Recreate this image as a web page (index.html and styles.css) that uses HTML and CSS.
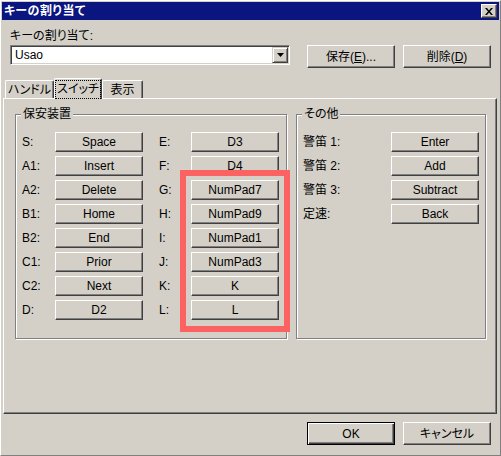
FILE: index.html
```html
<!DOCTYPE html>
<html lang="ja">
<head>
<meta charset="utf-8">
<title>キーの割り当て</title>
<link rel="stylesheet" href="styles.css">
</head>
<body>
<div class="window">
  <div class="titlebar">
    <span class="title">キーの割り当て</span>
    <span class="close"><svg width="8" height="7" viewBox="0 0 8 7"><path d="M0 0h2l2 2.5L6 0h2L5 3.5 8 7H6L4 4.5 2 7H0l3-3.5z" fill="#000"/></svg></span>
  </div>
  <div class="client">
    <div class="field-label">キーの割り当て:</div>
    <div class="top-row">
      <div class="combo">
        <span class="combo-text">Usao</span>
        <span class="combo-btn"><svg width="7" height="4" viewBox="0 0 7 4"><path d="M0 0h7L3.5 4z" fill="#000"/></svg></span>
      </div>
      <button class="btn top-btn">保存(<u>E</u>)...</button>
      <button class="btn top-btn">削除(<u>D</u>)</button>
    </div>
    <div class="tabs">
      <div class="tab t1">ハンドル</div>
      <div class="tab t2 selected"><span class="focus">スイッチ</span></div>
      <div class="tab t3">表示</div>
    </div>
    <div class="panel">
      <div class="groups">
        <div class="group g1">
          <div class="group-title">保安装置</div>
          <div class="grid grid1">
            <span class="lbl">S:</span><button class="btn key">Space</button><span></span><span class="lbl">E:</span><button class="btn key">D3</button>
            <span class="lbl">A1:</span><button class="btn key">Insert</button><span></span><span class="lbl">F:</span><button class="btn key">D4</button>
            <span class="lbl">A2:</span><button class="btn key">Delete</button><span></span><span class="lbl">G:</span><button class="btn key">NumPad7</button>
            <span class="lbl">B1:</span><button class="btn key">Home</button><span></span><span class="lbl">H:</span><button class="btn key">NumPad9</button>
            <span class="lbl">B2:</span><button class="btn key">End</button><span></span><span class="lbl">I:</span><button class="btn key">NumPad1</button>
            <span class="lbl">C1:</span><button class="btn key">Prior</button><span></span><span class="lbl">J:</span><button class="btn key">NumPad3</button>
            <span class="lbl">C2:</span><button class="btn key">Next</button><span></span><span class="lbl">K:</span><button class="btn key">K</button>
            <span class="lbl">D:</span><button class="btn key">D2</button><span></span><span class="lbl">L:</span><button class="btn key">L</button>
          </div>
        </div>
        <div class="group g2">
          <div class="group-title">その他</div>
          <div class="grid grid2">
            <span class="lbl">警笛 1:</span><button class="btn key">Enter</button>
            <span class="lbl">警笛 2:</span><button class="btn key">Add</button>
            <span class="lbl">警笛 3:</span><button class="btn key">Subtract</button>
            <span class="lbl">定速:</span><button class="btn key">Back</button>
          </div>
        </div>
      </div>
    </div>
    <div class="bottom-row">
      <button class="btn bottom-btn default">OK</button>
      <button class="btn bottom-btn">キャンセル</button>
    </div>
  </div>
  <div class="highlight"></div>
</div>
</body>
</html>
```
FILE: styles.css
```css
* { box-sizing: border-box; }
html, body { margin: 0; padding: 0; background: #d4d0c8; }
body {
  font-family: "Liberation Sans", "Noto Sans CJK JP", sans-serif;
  font-size: 12px;
  line-height: 14px;
  color: #000;
  font-feature-settings: "palt";
}
.window {
  position: relative;
  width: 501px;
  height: 456px;
  background: #d4d0c8;
  border: 1px solid;
  border-color: #ffffff #808080 #808080 #ffffff;
  padding: 1px;
  display: flex;
  flex-direction: column;
}
.titlebar {
  height: 18px;
  background: #0a1580;
  color: #fff;
  font-weight: bold;
  display: flex;
  align-items: center;
  justify-content: space-between;
  padding: 0 2px 0 2px;
}
.title { letter-spacing: 0.5px; }
.close {
  width: 16px;
  height: 14px;
  background: #d4d0c8;
  border: 1px solid;
  border-color: #fff #404040 #404040 #fff;
  box-shadow: inset -1px -1px #808080;
  display: flex;
  align-items: center;
  justify-content: center;
}
.client { flex: 1; display: flex; flex-direction: column; }
.field-label { margin: 9px 8px 0; height: 14px; }
.top-row {
  display: flex;
  align-items: flex-start;
  gap: 8px;
  margin: 2px 8px 0;
}
.combo {
  width: 280px;
  height: 20px;
  margin-right: 9px;
  background: #fff;
  border: 1px solid;
  border-color: #808080 #fff #fff #808080;
  box-shadow: inset 1px 1px #404040, inset -1px -1px #d4d0c8;
  padding: 1px;
  display: flex;
  align-items: center;
}
.combo-text { flex: 1; padding-left: 3px; }
.combo-btn {
  width: 16px;
  height: 16px;
  background: #d4d0c8;
  border: 1px solid;
  border-color: #d4d0c8 #404040 #404040 #d4d0c8;
  box-shadow: inset 1px 1px #fff, inset -1px -1px #808080;
  display: flex;
  align-items: center;
  justify-content: center;
}
.btn {
  font: inherit;
  color: #000;
  background: #d4d0c8;
  border: 1px solid;
  border-color: #fff #404040 #404040 #fff;
  box-shadow: inset -1px -1px #808080;
  padding: 0;
  margin: 0;
  text-align: center;
  border-radius: 0;
}
.btn u { text-decoration: underline; }
.top-btn { width: 88px; height: 23px; }
.tabs {
  display: flex;
  align-items: flex-end;
  height: 20px;
  margin: 10px 0 0 3px;
}
.tab {
  height: 18px;
  background: #d4d0c8;
  border-top: 1px solid #fff;
  border-left: 1px solid #fff;
  border-right: 1px solid #404040;
  box-shadow: inset -1px 0 #808080;
  border-radius: 2px 2px 0 0;
  display: flex;
  align-items: center;
  justify-content: center;
}
.t1 { width: 49px; }
.t2 { width: 48px; }
.t3 { width: 41px; }
.tab.selected {
  height: 21px;
  margin-bottom: -1px;
  position: relative;
  z-index: 1;
}
.focus {
  outline: 1px dotted #000;
  padding: 1px 1px 2px;
  line-height: 14px;
}
.panel {
  margin: 0 2px 0 1px;
  height: 316px;
  border-top: 1px solid #fff;
  border-left: 1px solid #fff;
  border-right: 1px solid #404040;
  border-bottom: 1px solid #404040;
  box-shadow: inset -1px -1px #808080;
  padding: 15px 0 0 11px;
}
.groups { display: flex; gap: 9px; }
.group {
  border: 1px solid #808080;
  box-shadow: inset 1px 1px #fff, 1px 1px #fff;
  padding: 0 0 18px 6px;
  display: flex;
  flex-direction: column;
}
.g1 { width: 272px; }
.g2 { width: 190px; }
.group-title {
  align-self: flex-start;
  margin: -8px 0 0 -1px;
  padding: 0 2px;
  background: #d4d0c8;
  height: 14px;
}
.grid {
  display: grid;
  grid-auto-rows: 20px;
  row-gap: 4px;
  margin-top: 11px;
  align-items: center;
}
.grid1 { grid-template-columns: 33px 88px 16px 32px 88px; }
.grid2 { grid-template-columns: 88px 88px; }
.lbl { white-space: nowrap; }
.key { width: 88px; height: 20px; }
.bottom-row {
  display: flex;
  justify-content: flex-end;
  gap: 8px;
  margin: 8px 8px 0 0;
}
.bottom-btn { width: 88px; height: 23px; }
.btn.default {
  border: 1px solid #000;
  box-shadow: inset 1px 1px #fff, inset -1px -1px #404040, inset -2px -2px #808080;
}
.highlight {
  position: absolute;
  left: 179px;
  top: 169px;
  width: 110px;
  height: 162px;
  border: 6px solid #fc6262;
  pointer-events: none;
}
```
